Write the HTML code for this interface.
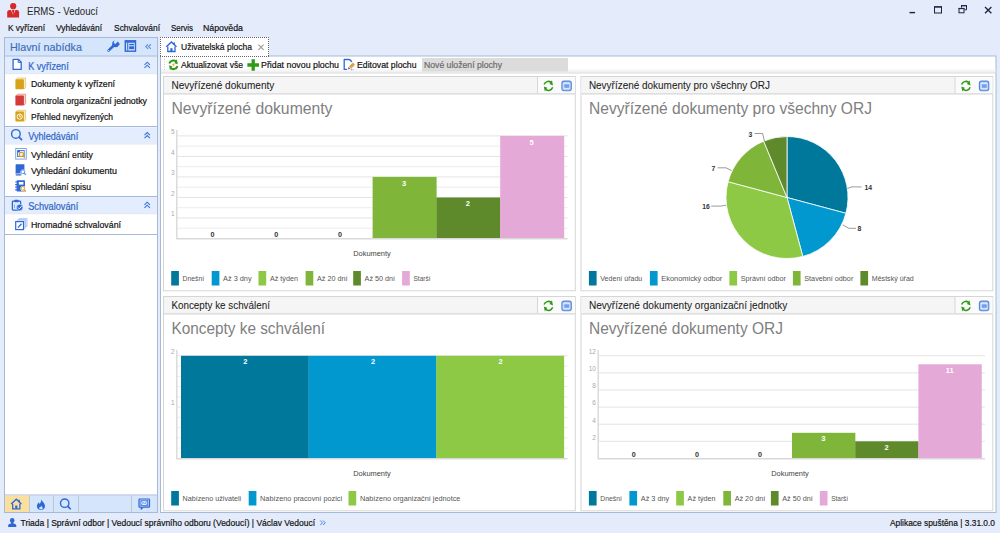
<!DOCTYPE html>
<html><head><meta charset="utf-8"><title>ERMS - Vedoucí</title>
<style>
html,body{margin:0;padding:0;background:#e4ecfb;overflow:hidden}
svg{display:block}
text{font-family:"Liberation Sans",sans-serif;}
</style></head><body>
<svg width="1000" height="533" viewBox="0 0 1000 533">
<rect x="0" y="0" width="1000" height="533" fill="#e4ecfb"/>
<g><circle cx="13.2" cy="6.2" r="3.1" fill="#d42a2a"/><path d="M7.2 17.4 V12.2 Q7.2 9.9 9.6 9.9 H16.8 Q19.1 9.9 19.1 12.2 V17.4 Z" fill="#d42a2a"/><path d="M11.3 9.9 L13.2 14.2 L15.1 9.9" stroke="#f6dcdc" stroke-width="0.9" fill="none"/><path d="M13.2 10.6 l0.8 1 l-0.4 3 l-0.4 0.8 l-0.4 -0.8 l-0.4 -3z" fill="#d42a2a"/></g>
<text class="t" x="27" y="14.8" font-size="10.2" fill="#2a2a2a" textLength="71" lengthAdjust="spacingAndGlyphs" stroke="#2a2a2a" stroke-width="0.05">ERMS - Vedoucí</text>
<path d="M909.5 12.6 h5.6" stroke="#1a2340" stroke-width="1.4" fill="none"/>
<rect x="934.5" y="7" width="7" height="6" stroke="#1a2340" stroke-width="1" fill="none"/><path d="M934 6.8 h8" stroke="#1a2340" stroke-width="1.2"/>
<path d="M961.5 7.6 V5.8 h5 v4 h-2" stroke="#1a2340" stroke-width="1" fill="none"/><rect x="959" y="8.6" width="5" height="4.2" stroke="#1a2340" stroke-width="1" fill="none"/><path d="M958.5 8.4 h6 M961 5.6 h6" stroke="#1a2340" stroke-width="1"/>
<path d="M985 7 l6.4 6.2 M991.4 7 l-6.4 6.2" stroke="#1a2340" stroke-width="1.3" fill="none"/>
<text class="t" x="8" y="30.8" font-size="9.5" fill="#111" textLength="37" lengthAdjust="spacingAndGlyphs" stroke="#111" stroke-width="0.2">K vyřízení</text>
<text class="t" x="56" y="30.8" font-size="9.5" fill="#111" textLength="46" lengthAdjust="spacingAndGlyphs" stroke="#111" stroke-width="0.2">Vyhledávání</text>
<text class="t" x="114" y="30.8" font-size="9.5" fill="#111" textLength="46" lengthAdjust="spacingAndGlyphs" stroke="#111" stroke-width="0.2">Schvalování</text>
<text class="t" x="171" y="30.8" font-size="9.5" fill="#111" textLength="22" lengthAdjust="spacingAndGlyphs" stroke="#111" stroke-width="0.2">Servis</text>
<text class="t" x="203" y="30.8" font-size="9.5" fill="#111" textLength="40" lengthAdjust="spacingAndGlyphs" stroke="#111" stroke-width="0.2">Nápověda</text>
<rect x="4.5" y="37.5" width="153" height="475" fill="#fff" stroke="#a6b9d8"/>
<rect x="5" y="38" width="152" height="17.5" fill="#d5e5fc"/>
<path d="M5 56 H157" stroke="#b3c6e4" stroke-width="1.6"/>
<text class="t" x="10" y="50.6" font-size="11.5" fill="#3a6ab8" textLength="72" lengthAdjust="spacingAndGlyphs" stroke="#3a6ab8" stroke-width="0.12">Hlavní nabídka</text>
<g transform="translate(106.9,40.4)"><path d="M1.6 10.3 L7.3 4.6" stroke="#2f68d3" stroke-width="2.5" stroke-linecap="round" fill="none"/><circle cx="8.6" cy="3.5" r="3.3" fill="#2f68d3"/><path d="M8.2 3.9 L12.5 -0.4 L9.5 -2 L6.6 1.6 Z" fill="#d5e4fb"/><path d="M9.6 4.8 L12.6 3.3" stroke="#2f68d3" stroke-width="1.6" fill="none"/><circle cx="1.7" cy="10.2" r="0.7" fill="#d5e4fb"/></g>
<g transform="translate(124.6,40.1)"><rect x="0" y="0" width="11.6" height="11.8" fill="#2f68d3"/><rect x="1.4" y="2.6" width="8.8" height="7.8" fill="#cfe0fb"/><rect x="2.6" y="2.6" width="1" height="7.8" fill="#2f68d3"/><rect x="4.6" y="3.8" width="4.8" height="1.3" fill="#2f68d3"/><rect x="4.6" y="6.2" width="4.8" height="2.8" fill="#2f68d3"/></g>
<g transform="translate(145.6,44.3)"><path d="M2.4 0 L0.2 2.3 L2.4 4.6 M5.2 0 L3 2.3 L5.2 4.6" stroke="#5f8de2" stroke-width="1.2" fill="none"/></g>
<rect x="5" y="57" width="152" height="16.2" fill="#e3edfd"/>
<path d="M5 73.7 H157" stroke="#dfe5ee"/>
<text class="t" x="28.2" y="69.5" font-size="10" fill="#2f64c8" textLength="40.5" lengthAdjust="spacingAndGlyphs" stroke="#2f64c8" stroke-width="0.2">K vyřízení</text>
<g transform="translate(144.3,61.9)"><path d="M0.2 2.9 L2.9 0.3 L5.6 2.9 M0.2 5.9 L2.9 3.3 L5.6 5.9" stroke="#3a72da" stroke-width="1.1" fill="none"/></g>
<rect x="5" y="127.3" width="152" height="16.2" fill="#e3edfd"/>
<path d="M5 144.0 H157" stroke="#dfe5ee"/>
<text class="t" x="28.2" y="139.8" font-size="10" fill="#2f64c8" textLength="50" lengthAdjust="spacingAndGlyphs" stroke="#2f64c8" stroke-width="0.2">Vyhledávání</text>
<g transform="translate(144.3,132.2)"><path d="M0.2 2.9 L2.9 0.3 L5.6 2.9 M0.2 5.9 L2.9 3.3 L5.6 5.9" stroke="#3a72da" stroke-width="1.1" fill="none"/></g>
<rect x="5" y="197" width="152" height="16.2" fill="#e3edfd"/>
<path d="M5 213.7 H157" stroke="#dfe5ee"/>
<text class="t" x="28.2" y="209.5" font-size="10" fill="#2f64c8" textLength="50" lengthAdjust="spacingAndGlyphs" stroke="#2f64c8" stroke-width="0.2">Schvalování</text>
<g transform="translate(144.3,201.9)"><path d="M0.2 2.9 L2.9 0.3 L5.6 2.9 M0.2 5.9 L2.9 3.3 L5.6 5.9" stroke="#3a72da" stroke-width="1.1" fill="none"/></g>
<path d="M5 126.5 H157 M5 196.5 H157 M5 234.5 H157" stroke="#a6b9d8"/>
<g transform="translate(12.4,58.6)"><path d="M0.7 0.7 H6 L8.8 3.6 V10.8 H0.7 Z" fill="#fff" stroke="#2f68d3" stroke-width="1.3" stroke-linejoin="round"/><path d="M5.8 0.8 V3.8 H8.8" fill="none" stroke="#2f68d3" stroke-width="1"/></g>
<circle cx="15.9" cy="133.9" r="4.3" fill="none" stroke="#2f68d3" stroke-width="1.4"/><path d="M19.14 137.14 L21.54 139.54" stroke="#2f68d3" stroke-width="1.7" stroke-linecap="round"/>
<g transform="translate(11.7,199.5)"><rect x="0.7" y="1.6" width="8.2" height="9" rx="0.8" fill="#e3edfd" stroke="#2f68d3" stroke-width="1.3"/><rect x="2.8" y="0.2" width="4" height="2.6" rx="0.6" fill="#2f68d3"/><path d="M2.8 5 V8.6" stroke="#7ea6ea" stroke-width="0.9"/><circle cx="8" cy="8" r="3.2" fill="#2f68d3" stroke="#e3edfd" stroke-width="0.6"/><path d="M6.3 8 L7.6 9.3 L9.8 6.8" stroke="#fff" stroke-width="1" fill="none"/></g>
<text class="t" x="31" y="87.4" font-size="9.3" fill="#111" textLength="84" lengthAdjust="spacingAndGlyphs" stroke="#111" stroke-width="0.2">Dokumenty k vyřízení</text>
<text class="t" x="31" y="103.6" font-size="9.3" fill="#111" textLength="116" lengthAdjust="spacingAndGlyphs" stroke="#111" stroke-width="0.2">Kontrola organizační jednotky</text>
<text class="t" x="31" y="119.8" font-size="9.3" fill="#111" textLength="82" lengthAdjust="spacingAndGlyphs" stroke="#111" stroke-width="0.2">Přehled nevyřízených</text>
<text class="t" x="31" y="157.6" font-size="9.3" fill="#111" textLength="62" lengthAdjust="spacingAndGlyphs" stroke="#111" stroke-width="0.2">Vyhledání entity</text>
<text class="t" x="31" y="173.8" font-size="9.3" fill="#111" textLength="86" lengthAdjust="spacingAndGlyphs" stroke="#111" stroke-width="0.2">Vyhledání dokumentu</text>
<text class="t" x="31" y="190" font-size="9.3" fill="#111" textLength="60" lengthAdjust="spacingAndGlyphs" stroke="#111" stroke-width="0.2">Vyhledání spisu</text>
<text class="t" x="31" y="227.8" font-size="9.3" fill="#111" textLength="90" lengthAdjust="spacingAndGlyphs" stroke="#111" stroke-width="0.2">Hromadné schvalování</text>
<g transform="translate(15.2,77.6)"><path d="M1 1.7 L2.3 0.4 H10.4 V9.9 L9 11.4 Z" fill="#f8ecc8" stroke="#d6a21a" stroke-width="0.45" stroke-linejoin="round"/><rect x="0.2" y="1.7" width="8.5" height="9.9" rx="0.7" fill="#d6a21a"/></g>
<g transform="translate(15.2,93.8)"><path d="M1 1.7 L2.3 0.4 H10.4 V9.9 L9 11.4 Z" fill="#f7dccb" stroke="#d33b3b" stroke-width="0.45" stroke-linejoin="round"/><rect x="0.2" y="1.7" width="8.5" height="9.9" rx="0.7" fill="#d33b3b"/></g>
<g transform="translate(15.2,109.9)"><path d="M1 1.7 L2.3 0.4 H10.4 V9.9 L9 11.4 Z" fill="#f8ecc8" stroke="#d6a21a" stroke-width="0.45" stroke-linejoin="round"/><rect x="0.2" y="1.7" width="8.5" height="9.9" rx="0.7" fill="#d6a21a"/><circle cx="4.5" cy="6.7" r="2.6" fill="none" stroke="#fff" stroke-width="1"/><path d="M4.5 5.2 V6.9 H5.8" stroke="#fff" stroke-width="0.9" fill="none"/></g>
<g transform="translate(15.2,148)"><rect x="0.5" y="0.5" width="10.6" height="10.6" fill="#fff" stroke="#7ea6ea" stroke-width="1"/><rect x="2.4" y="2.4" width="6.6" height="6.2" fill="#eef3fc" stroke="#2f68d3" stroke-width="0.8"/><rect x="2.4" y="2.4" width="2.4" height="2" fill="#2f68d3"/><circle cx="6.2" cy="6.4" r="2.1" fill="none" stroke="#e39a1c" stroke-width="1.1"/><path d="M7.88 8.08 L9.18 9.38" stroke="#e39a1c" stroke-width="1.4000000000000001" stroke-linecap="round"/></g>
<g transform="translate(15.4,164)"><path d="M0.2 1 Q0.2 0.2 1 0.2 H9 V9.4 H1.4 Q0.2 9.4 0.2 10.4 Z" fill="#2f68d3"/><path d="M0.2 10.4 Q0.2 11.6 1.4 11.6 H6 V10.2 H1.4" fill="#2f68d3"/><circle cx="7.6" cy="8" r="2.6" fill="#fff"/><circle cx="7.4" cy="7.8" r="1.9" fill="none" stroke="#5c90e6" stroke-width="1"/><path d="M8.94 9.34 L10.14 10.54" stroke="#5c90e6" stroke-width="1.3" stroke-linecap="round"/></g>
<g transform="translate(15.2,180)"><rect x="1.4" y="0.2" width="8.4" height="11.4" rx="0.8" fill="#2f68d3"/><path d="M0 2 H2.2 M0 4.6 H2.2 M0 7.2 H2.2 M0 9.8 H2.2" stroke="#2f68d3" stroke-width="1.2"/><rect x="3.6" y="2" width="4.6" height="2.6" fill="#fff"/><circle cx="7.8" cy="8.6" r="2.6" fill="#fff"/><circle cx="7.6" cy="8.4" r="1.8" fill="none" stroke="#e39a1c" stroke-width="1"/><path d="M9.07 9.87 L10.27 11.07" stroke="#e39a1c" stroke-width="1.3" stroke-linecap="round"/></g>
<g transform="translate(15.1,218)"><rect x="4" y="0.3" width="8" height="8.4" fill="#cfdff8" stroke="#a9c4f0" stroke-width="0.6"/><rect x="2.2" y="1.8" width="8" height="8.4" fill="#cfdff8" stroke="#9dbcee" stroke-width="0.6"/><rect x="0.6" y="3.6" width="7.8" height="8" fill="#fff" stroke="#2f68d3" stroke-width="1.2"/><path d="M2.8 9.6 L6.4 5.8" stroke="#2f68d3" stroke-width="1.3"/></g>
<rect x="5" y="495.5" width="152" height="16.5" fill="#d5e5fc"/>
<path d="M5 495 H157" stroke="#a6b9d8"/>
<rect x="5" y="495.5" width="24" height="16.5" fill="#fbdf9f"/>
<path d="M29.5 495.5 V512 M53.5 495.5 V512 M78.5 495.5 V512 M131.5 495.5 V512" stroke="#bcc6d6"/>
<g transform="translate(10.8,498.5)"><path d="M0.4 5.6 L5.5 0.7 L10.6 5.6" fill="none" stroke="#2f68d3" stroke-width="1.4" stroke-linejoin="miter"/><path d="M1.9 5.2 V10.3 H9.1 V5.2" fill="none" stroke="#2f68d3" stroke-width="1.3"/><rect x="4.4" y="7" width="2.2" height="3.2" fill="#2f68d3"/><rect x="7.6" y="1.2" width="1.4" height="2.4" fill="#2f68d3"/></g>
<g transform="translate(36.8,499.4)"><path d="M4.4 0 C5.4 2 8.2 3.6 8.2 6.8 C8.2 9.2 6.4 10.6 4.2 10.6 C1.8 10.6 0.1 9.2 0.1 6.9 C0.1 5 1.3 4.2 1.9 2.8 C2.5 3.6 2.6 4.2 2.8 4.6 C3.6 3.4 4.6 2 4.4 0 Z" fill="#2f68d3"/><path d="M4.2 6.2 C4.8 7.2 5.9 7.8 5.9 8.8 C5.9 9.6 5.2 10 4.2 10 C3.2 10 2.5 9.6 2.5 8.8 C2.5 8 3 7.8 3.3 7.2 C3.6 7.6 3.7 7.8 3.9 7.8 C4.2 7.4 4.3 6.8 4.2 6.2 Z" fill="#d5e4fb"/></g>
<circle cx="64.7" cy="503.2" r="4.2" fill="none" stroke="#2f68d3" stroke-width="1.4"/><path d="M67.87 506.37 L70.27 508.77" stroke="#2f68d3" stroke-width="1.7" stroke-linecap="round"/>
<g transform="translate(138.5,498.4)"><path d="M1.2 0.6 H10.3 Q11 0.6 11 1.3 V8 Q11 8.7 10.3 8.7 H4.6 L2.8 10.8 V8.7 H1.2 Q0.5 8.7 0.5 8 V1.3 Q0.5 0.6 1.2 0.6 Z" fill="#bcd2f7" stroke="#2f68d3" stroke-width="1.2" stroke-linejoin="round"/><rect x="2.4" y="2.4" width="6.8" height="4.6" fill="#e9f0fd" stroke="#2f68d3" stroke-width="0.7"/><path d="M2.4 2.4 L5.8 5.2 L9.2 2.4 M2.4 7 L4.8 4.6 M9.2 7 L6.8 4.6" stroke="#2f68d3" stroke-width="0.6" fill="none"/></g>
<g transform="translate(8,518)"><circle cx="4.2" cy="2.4" r="2.3" fill="#2f68d3"/><path d="M3.1 4 H5.3 V5.6 Q8.3 6 8.3 8 V9 H0.1 V8 Q0.1 6 3.1 5.6 Z" fill="#2f68d3"/></g>
<text class="t" x="20.5" y="526" font-size="9.5" fill="#111" textLength="294.5" lengthAdjust="spacingAndGlyphs" stroke="#111" stroke-width="0.2">Triada | Správní odbor | Vedoucí správního odboru (Vedoucí) | Václav Vedoucí</text>
<g transform="translate(320,520.5)"><path d="M0.3 0 L2.5 2.3 L0.3 4.6 M3.1 0 L5.3 2.3 L3.1 4.6" stroke="#4a82e0" stroke-width="1" fill="none"/></g>
<text class="t" x="890" y="526" font-size="9.5" fill="#111" textLength="105" lengthAdjust="spacingAndGlyphs" stroke="#111" stroke-width="0.2">Aplikace spuštěna | 3.31.0.0</text>
<rect x="160.5" y="56" width="835.5" height="456.5" fill="#fff" stroke="#a6b9d8"/>
<rect x="160" y="37" width="109" height="20" fill="#fff"/>
<path d="M160 37.5 H269 M160 56.5 H269 M160.5 37 V57 M268.5 37 V57" stroke="#666" stroke-dasharray="1 1" fill="none"/>
<g transform="translate(165.9,41.2)"><path d="M0.4 5.6 L5.5 0.7 L10.6 5.6" fill="none" stroke="#2f68d3" stroke-width="1.4" stroke-linejoin="miter"/><path d="M1.9 5.2 V10.3 H9.1 V5.2" fill="none" stroke="#2f68d3" stroke-width="1.3"/><rect x="4.4" y="7" width="2.2" height="3.2" fill="#2f68d3"/><rect x="7.6" y="1.2" width="1.4" height="2.4" fill="#2f68d3"/></g>
<text class="t" x="181" y="49.8" font-size="9.5" fill="#111" textLength="71" lengthAdjust="spacingAndGlyphs" stroke="#111" stroke-width="0.2">Uživatelská plocha</text>
<path d="M258.4 44.6 l5.2 5.2 M263.6 44.6 l-5.2 5.2" stroke="#9a9a9a" stroke-width="1.1" fill="none"/>
<rect x="161" y="69" width="834.5" height="1.5" fill="#f8f8f8"/><rect x="161" y="70.5" width="834.5" height="2" fill="#f1f1f1"/>
<path d="M161 73 H995.5" stroke="#d9d9d9"/>
<rect x="422" y="58" width="146" height="13.5" fill="#dcdcdc"/>
<path d="M164.5 59 V71" stroke="#c9c9c9" stroke-dasharray="1 1.5"/>
<g transform="translate(173.4,64.8)"><path d="M-4.09 -1.33 A4.3 4.3 0 0 1 2.65 -3.39" stroke="#2f9a18" stroke-width="2" fill="none"/><path d="M3.44 -5.51 L1.01 -1.61 L4.38 -0.46 Z" fill="#2f9a18"/><path d="M4.09 1.33 A4.3 4.3 0 0 1 -2.65 3.39" stroke="#2f9a18" stroke-width="2" fill="none"/><path d="M-3.44 5.51 L-1.01 1.61 L-4.38 0.46 Z" fill="#2f9a18"/><circle cx="0" cy="0" r="1.2" fill="#f0b43c"/></g>
<text class="t" x="181" y="67.7" font-size="9.5" fill="#111" textLength="62" lengthAdjust="spacingAndGlyphs" stroke="#111" stroke-width="0.2">Aktualizovat vše</text>
<g transform="translate(247.4,59.2)"><path d="M0 5.8 H11.6 M5.8 0 V11.6" stroke="#2f9a18" stroke-width="3.3" fill="none"/></g>
<text class="t" x="261" y="67.7" font-size="9.5" fill="#111" textLength="78" lengthAdjust="spacingAndGlyphs" stroke="#111" stroke-width="0.2">Přidat novou plochu</text>
<g transform="translate(343.5,58.8)"><path d="M3.6 10.6 H0.7 V0.7 H5.6 Q7.6 1 8.2 3.2" fill="none" stroke="#2f68d3" stroke-width="1.3" stroke-linejoin="round"/><path d="M7.4 10.9 h0.9 M9.2 10.9 h0.6" stroke="#2f68d3" stroke-width="0.9"/><path d="M10.4 4.8 L6.6 8.8" stroke="#dba055" stroke-width="3" fill="none"/><path d="M4.6 10.4 L5 8.3 L6.9 10 Z" fill="#5a5048"/><path d="M5.3 7.9 L7.5 10" stroke="#f3dcb8" stroke-width="0.8"/></g>
<text class="t" x="357" y="67.7" font-size="9.5" fill="#111" textLength="59.5" lengthAdjust="spacingAndGlyphs" stroke="#111" stroke-width="0.2">Editovat plochu</text>
<text class="t" x="424" y="67.7" font-size="9.5" fill="#6a6a6a" textLength="78" lengthAdjust="spacingAndGlyphs" stroke="#6a6a6a" stroke-width="0.2">Nové uložení plochy</text>
<rect x="163.5" y="76.5" width="411.8" height="214.3" fill="#fff" stroke="#d6d6d6"/>
<rect x="164" y="77" width="374" height="16.5" fill="#f5f5f5"/>
<rect x="538" y="77" width="37" height="16.5" fill="#fbfbfb"/>
<path d="M164 93.8 H575" stroke="#d6d6d6" stroke-width="1.3"/><path d="M537.5 77 V93" stroke="#d6d6d6"/>
<text class="t" x="171.4" y="89.4" font-size="10.2" fill="#1c1c1c" textLength="103" lengthAdjust="spacingAndGlyphs" stroke="#1c1c1c" stroke-width="0.05">Nevyřízené dokumenty</text>
<text class="t" x="171.5" y="113.7" font-size="15.6" fill="#808080" textLength="161" lengthAdjust="spacingAndGlyphs">Nevyřízené dokumenty</text>
<g transform="translate(548.4,85.9)"><path d="M-4.28 -1.39 A4.5 4.5 0 0 1 2.77 -3.55" stroke="#2f9a18" stroke-width="1.5" fill="none"/><path d="M3.55 -5.68 L1.11 -1.78 L4.57 -0.48 Z" fill="#2f9a18"/><path d="M4.28 1.39 A4.5 4.5 0 0 1 -2.77 3.55" stroke="#2f9a18" stroke-width="1.5" fill="none"/><path d="M-3.55 5.68 L-1.11 1.78 L-4.57 0.48 Z" fill="#2f9a18"/></g>
<g transform="translate(561.3,80.5)"><rect x="0.6" y="0.6" width="9.4" height="9.6" rx="2.2" fill="#b5ccf2" stroke="#4f86df" stroke-width="1.1"/><rect x="2.1" y="2.1" width="6.4" height="6.4" fill="#dbe7fb"/><rect x="3" y="3.9" width="4.9" height="3.3" fill="#5f92e4"/><rect x="3" y="5.3" width="4.9" height="0.5" fill="#a9c5f2"/></g>
<rect x="581.0" y="76.5" width="411.8" height="214.3" fill="#fff" stroke="#d6d6d6"/>
<rect x="581.5" y="77" width="374" height="16.5" fill="#f5f5f5"/>
<rect x="955.5" y="77" width="37" height="16.5" fill="#fbfbfb"/>
<path d="M581.5 93.8 H992.5" stroke="#d6d6d6" stroke-width="1.3"/><path d="M955.0 77 V93" stroke="#d6d6d6"/>
<text class="t" x="588.9" y="89.4" font-size="10.2" fill="#1c1c1c" textLength="181" lengthAdjust="spacingAndGlyphs" stroke="#1c1c1c" stroke-width="0.05">Nevyřízené dokumenty pro všechny ORJ</text>
<text class="t" x="589.0" y="113.7" font-size="15.6" fill="#808080" textLength="283" lengthAdjust="spacingAndGlyphs">Nevyřízené dokumenty pro všechny ORJ</text>
<g transform="translate(965.9,85.9)"><path d="M-4.28 -1.39 A4.5 4.5 0 0 1 2.77 -3.55" stroke="#2f9a18" stroke-width="1.5" fill="none"/><path d="M3.55 -5.68 L1.11 -1.78 L4.57 -0.48 Z" fill="#2f9a18"/><path d="M4.28 1.39 A4.5 4.5 0 0 1 -2.77 3.55" stroke="#2f9a18" stroke-width="1.5" fill="none"/><path d="M-3.55 5.68 L-1.11 1.78 L-4.57 0.48 Z" fill="#2f9a18"/></g>
<g transform="translate(978.8,80.5)"><rect x="0.6" y="0.6" width="9.4" height="9.6" rx="2.2" fill="#b5ccf2" stroke="#4f86df" stroke-width="1.1"/><rect x="2.1" y="2.1" width="6.4" height="6.4" fill="#dbe7fb"/><rect x="3" y="3.9" width="4.9" height="3.3" fill="#5f92e4"/><rect x="3" y="5.3" width="4.9" height="0.5" fill="#a9c5f2"/></g>
<rect x="163.5" y="296.5" width="411.8" height="214.3" fill="#fff" stroke="#d6d6d6"/>
<rect x="164" y="297" width="374" height="16.5" fill="#f5f5f5"/>
<rect x="538" y="297" width="37" height="16.5" fill="#fbfbfb"/>
<path d="M164 313.8 H575" stroke="#d6d6d6" stroke-width="1.3"/><path d="M537.5 297 V313" stroke="#d6d6d6"/>
<text class="t" x="171.4" y="309.4" font-size="10.2" fill="#1c1c1c" textLength="98.5" lengthAdjust="spacingAndGlyphs" stroke="#1c1c1c" stroke-width="0.05">Koncepty ke schválení</text>
<text class="t" x="171.5" y="333.7" font-size="15.6" fill="#808080" textLength="153.5" lengthAdjust="spacingAndGlyphs">Koncepty ke schválení</text>
<g transform="translate(548.4,305.9)"><path d="M-4.28 -1.39 A4.5 4.5 0 0 1 2.77 -3.55" stroke="#2f9a18" stroke-width="1.5" fill="none"/><path d="M3.55 -5.68 L1.11 -1.78 L4.57 -0.48 Z" fill="#2f9a18"/><path d="M4.28 1.39 A4.5 4.5 0 0 1 -2.77 3.55" stroke="#2f9a18" stroke-width="1.5" fill="none"/><path d="M-3.55 5.68 L-1.11 1.78 L-4.57 0.48 Z" fill="#2f9a18"/></g>
<g transform="translate(561.3,300.5)"><rect x="0.6" y="0.6" width="9.4" height="9.6" rx="2.2" fill="#b5ccf2" stroke="#4f86df" stroke-width="1.1"/><rect x="2.1" y="2.1" width="6.4" height="6.4" fill="#dbe7fb"/><rect x="3" y="3.9" width="4.9" height="3.3" fill="#5f92e4"/><rect x="3" y="5.3" width="4.9" height="0.5" fill="#a9c5f2"/></g>
<rect x="581.0" y="296.5" width="411.8" height="214.3" fill="#fff" stroke="#d6d6d6"/>
<rect x="581.5" y="297" width="374" height="16.5" fill="#f5f5f5"/>
<rect x="955.5" y="297" width="37" height="16.5" fill="#fbfbfb"/>
<path d="M581.5 313.8 H992.5" stroke="#d6d6d6" stroke-width="1.3"/><path d="M955.0 297 V313" stroke="#d6d6d6"/>
<text class="t" x="588.9" y="309.4" font-size="10.2" fill="#1c1c1c" textLength="198.5" lengthAdjust="spacingAndGlyphs" stroke="#1c1c1c" stroke-width="0.05">Nevyřízené dokumenty organizační jednotky</text>
<text class="t" x="589.0" y="333.7" font-size="15.6" fill="#808080" textLength="194" lengthAdjust="spacingAndGlyphs">Nevyřízené dokumenty ORJ</text>
<g transform="translate(965.9,305.9)"><path d="M-4.28 -1.39 A4.5 4.5 0 0 1 2.77 -3.55" stroke="#2f9a18" stroke-width="1.5" fill="none"/><path d="M3.55 -5.68 L1.11 -1.78 L4.57 -0.48 Z" fill="#2f9a18"/><path d="M4.28 1.39 A4.5 4.5 0 0 1 -2.77 3.55" stroke="#2f9a18" stroke-width="1.5" fill="none"/><path d="M-3.55 5.68 L-1.11 1.78 L-4.57 0.48 Z" fill="#2f9a18"/></g>
<g transform="translate(978.8,300.5)"><rect x="0.6" y="0.6" width="9.4" height="9.6" rx="2.2" fill="#b5ccf2" stroke="#4f86df" stroke-width="1.1"/><rect x="2.1" y="2.1" width="6.4" height="6.4" fill="#dbe7fb"/><rect x="3" y="3.9" width="4.9" height="3.3" fill="#5f92e4"/><rect x="3" y="5.3" width="4.9" height="0.5" fill="#a9c5f2"/></g>
<path d="M176.8 228.24 H567.5" stroke="#ececec"/>
<path d="M176.8 217.98 H567.5" stroke="#e3e3e3"/>
<path d="M176.8 207.72 H567.5" stroke="#ececec"/>
<path d="M176.8 197.46 H567.5" stroke="#e3e3e3"/>
<path d="M176.8 187.2 H567.5" stroke="#ececec"/>
<path d="M176.8 176.94 H567.5" stroke="#e3e3e3"/>
<path d="M176.8 166.68 H567.5" stroke="#ececec"/>
<path d="M176.8 156.42 H567.5" stroke="#e3e3e3"/>
<path d="M176.8 146.16 H567.5" stroke="#ececec"/>
<path d="M176.8 135.9 H567.5" stroke="#e3e3e3"/>
<text class="t" x="212.4" y="237.0" font-size="7.2" fill="#333" font-weight="bold" text-anchor="middle">0</text>
<text class="t" x="276.3" y="237.0" font-size="7.2" fill="#333" font-weight="bold" text-anchor="middle">0</text>
<text class="t" x="340.1" y="237.0" font-size="7.2" fill="#333" font-weight="bold" text-anchor="middle">0</text>
<rect x="372.6" y="176.9" width="64.00" height="61.6" fill="#7fb63a"/>
<text class="t" x="404.0" y="185.5" font-size="7.5" fill="#fff" font-weight="bold" text-anchor="middle">3</text>
<rect x="436.4" y="197.5" width="64.00" height="41.0" fill="#5f8a2b"/>
<text class="t" x="467.8" y="206.1" font-size="7.5" fill="#fff" font-weight="bold" text-anchor="middle">2</text>
<rect x="500.2" y="135.9" width="64.00" height="102.6" fill="#e4a9d7"/>
<text class="t" x="531.7" y="144.5" font-size="7.5" fill="#fff" font-weight="bold" text-anchor="middle">5</text>
<path d="M176.8 130 V238.8 H567.5" stroke="#d9d9d9" stroke-width="1.4" fill="none"/>
<text class="t" x="174.5" y="216.3" font-size="6.5" fill="#aaa" text-anchor="end">1</text>
<text class="t" x="174.5" y="195.8" font-size="6.5" fill="#aaa" text-anchor="end">2</text>
<text class="t" x="174.5" y="175.2" font-size="6.5" fill="#aaa" text-anchor="end">3</text>
<text class="t" x="174.5" y="154.7" font-size="6.5" fill="#aaa" text-anchor="end">4</text>
<text class="t" x="174.5" y="134.2" font-size="6.5" fill="#aaa" text-anchor="end">5</text>
<text class="t" x="372" y="256.2" font-size="7" fill="#444" textLength="37.5" lengthAdjust="spacingAndGlyphs" text-anchor="middle">Dokumenty</text>
<rect x="171.2" y="271" width="7.7" height="14.5" fill="#00789c"/>
<text class="t" x="182.6" y="281" font-size="7" fill="#555" textLength="21.5" lengthAdjust="spacingAndGlyphs">Dnešní</text>
<rect x="211.7" y="271" width="7.7" height="14.5" fill="#0098cf"/>
<text class="t" x="223.1" y="281" font-size="7" fill="#555" textLength="28.5" lengthAdjust="spacingAndGlyphs">Až 3 dny</text>
<rect x="258.5" y="271" width="7.7" height="14.5" fill="#8dc944"/>
<text class="t" x="269.90000000000003" y="281" font-size="7" fill="#555" textLength="28" lengthAdjust="spacingAndGlyphs">Až týden</text>
<rect x="305.59999999999997" y="271" width="7.7" height="14.5" fill="#7fb63a"/>
<text class="t" x="317.0" y="281" font-size="7" fill="#555" textLength="30.5" lengthAdjust="spacingAndGlyphs">Až 20 dní</text>
<rect x="353.2" y="271" width="7.7" height="14.5" fill="#5f8a2b"/>
<text class="t" x="364.6" y="281" font-size="7" fill="#555" textLength="30.5" lengthAdjust="spacingAndGlyphs">Až 50 dní</text>
<rect x="402.09999999999997" y="271" width="7.7" height="14.5" fill="#e4a9d7"/>
<text class="t" x="413.5" y="281" font-size="7" fill="#555" textLength="17" lengthAdjust="spacingAndGlyphs">Starší</text>
<path d="M598.2 441.3 H985" stroke="#e3e3e3"/>
<path d="M598.2 424.2 H985" stroke="#e3e3e3"/>
<path d="M598.2 407.1 H985" stroke="#e3e3e3"/>
<path d="M598.2 390.0 H985" stroke="#e3e3e3"/>
<path d="M598.2 372.9 H985" stroke="#e3e3e3"/>
<path d="M598.2 355.8 H985" stroke="#e3e3e3"/>
<text class="t" x="633.7" y="456.9" font-size="7.2" fill="#333" font-weight="bold" text-anchor="middle">0</text>
<text class="t" x="696.9" y="456.9" font-size="7.2" fill="#333" font-weight="bold" text-anchor="middle">0</text>
<text class="t" x="760.1" y="456.9" font-size="7.2" fill="#333" font-weight="bold" text-anchor="middle">0</text>
<rect x="792.0" y="432.8" width="63.35" height="25.6" fill="#7fb63a"/>
<text class="t" x="823.3" y="441.4" font-size="7.5" fill="#fff" font-weight="bold" text-anchor="middle">3</text>
<rect x="855.2" y="441.3" width="63.35" height="17.1" fill="#5f8a2b"/>
<text class="t" x="886.5" y="449.9" font-size="7.5" fill="#fff" font-weight="bold" text-anchor="middle">2</text>
<rect x="918.4" y="364.3" width="63.35" height="94.1" fill="#e4a9d7"/>
<text class="t" x="949.7" y="372.9" font-size="7.5" fill="#fff" font-weight="bold" text-anchor="middle">11</text>
<path d="M598.2 350 V458.7 H985" stroke="#d9d9d9" stroke-width="1.4" fill="none"/>
<text class="t" x="595.9000000000001" y="439.6" font-size="6.5" fill="#aaa" text-anchor="end">2</text>
<text class="t" x="595.9000000000001" y="422.5" font-size="6.5" fill="#aaa" text-anchor="end">4</text>
<text class="t" x="595.9000000000001" y="405.4" font-size="6.5" fill="#aaa" text-anchor="end">6</text>
<text class="t" x="595.9000000000001" y="388.3" font-size="6.5" fill="#aaa" text-anchor="end">8</text>
<text class="t" x="595.9000000000001" y="371.2" font-size="6.5" fill="#aaa" text-anchor="end">10</text>
<text class="t" x="595.9000000000001" y="354.1" font-size="6.5" fill="#aaa" text-anchor="end">12</text>
<text class="t" x="790" y="476" font-size="7" fill="#444" textLength="37.5" lengthAdjust="spacingAndGlyphs" text-anchor="middle">Dokumenty</text>
<rect x="588.9000000000001" y="491" width="7.7" height="14.5" fill="#00789c"/>
<text class="t" x="600.3000000000001" y="501" font-size="7" fill="#555" textLength="21.5" lengthAdjust="spacingAndGlyphs">Dnešní</text>
<rect x="629.4000000000001" y="491" width="7.7" height="14.5" fill="#0098cf"/>
<text class="t" x="640.8000000000001" y="501" font-size="7" fill="#555" textLength="28.5" lengthAdjust="spacingAndGlyphs">Až 3 dny</text>
<rect x="676.2" y="491" width="7.7" height="14.5" fill="#8dc944"/>
<text class="t" x="687.6" y="501" font-size="7" fill="#555" textLength="28" lengthAdjust="spacingAndGlyphs">Až týden</text>
<rect x="723.3000000000001" y="491" width="7.7" height="14.5" fill="#7fb63a"/>
<text class="t" x="734.7" y="501" font-size="7" fill="#555" textLength="30.5" lengthAdjust="spacingAndGlyphs">Až 20 dní</text>
<rect x="770.9000000000001" y="491" width="7.7" height="14.5" fill="#5f8a2b"/>
<text class="t" x="782.3000000000001" y="501" font-size="7" fill="#555" textLength="30.5" lengthAdjust="spacingAndGlyphs">Až 50 dní</text>
<rect x="819.8000000000001" y="491" width="7.7" height="14.5" fill="#e4a9d7"/>
<text class="t" x="831.2" y="501" font-size="7" fill="#555" textLength="17" lengthAdjust="spacingAndGlyphs">Starší</text>
<path d="M176.8 448.14 H567.5" stroke="#ececec"/>
<path d="M176.8 437.88 H567.5" stroke="#ececec"/>
<path d="M176.8 427.62 H567.5" stroke="#ececec"/>
<path d="M176.8 417.36 H567.5" stroke="#ececec"/>
<path d="M176.8 407.1 H567.5" stroke="#e3e3e3"/>
<path d="M176.8 396.84 H567.5" stroke="#ececec"/>
<path d="M176.8 386.58 H567.5" stroke="#ececec"/>
<path d="M176.8 376.32 H567.5" stroke="#ececec"/>
<path d="M176.8 366.06 H567.5" stroke="#ececec"/>
<path d="M176.8 355.8 H567.5" stroke="#e3e3e3"/>
<rect x="181.0" y="355.8" width="127.82" height="102.6" fill="#00789c"/>
<text class="t" x="245.3" y="364.4" font-size="7.5" fill="#fff" font-weight="bold" text-anchor="middle">2</text>
<rect x="308.7" y="355.8" width="127.82" height="102.6" fill="#0098cf"/>
<text class="t" x="373.0" y="364.4" font-size="7.5" fill="#fff" font-weight="bold" text-anchor="middle">2</text>
<rect x="436.3" y="355.8" width="127.82" height="102.6" fill="#8dc944"/>
<text class="t" x="500.7" y="364.4" font-size="7.5" fill="#fff" font-weight="bold" text-anchor="middle">2</text>
<path d="M176.8 350 V458.7 H567.5" stroke="#d9d9d9" stroke-width="1.4" fill="none"/>
<text class="t" x="174.5" y="405.4" font-size="6.5" fill="#aaa" text-anchor="end">1</text>
<text class="t" x="174.5" y="354.1" font-size="6.5" fill="#aaa" text-anchor="end">2</text>
<text class="t" x="372" y="475.7" font-size="7" fill="#444" textLength="37.5" lengthAdjust="spacingAndGlyphs" text-anchor="middle">Dokumenty</text>
<rect x="171.2" y="491" width="7.7" height="14.5" fill="#00789c"/>
<text class="t" x="182.6" y="501" font-size="7" fill="#555" textLength="58.5" lengthAdjust="spacingAndGlyphs">Nabízeno uživateli</text>
<rect x="248.7" y="491" width="7.7" height="14.5" fill="#0098cf"/>
<text class="t" x="260.1" y="501" font-size="7" fill="#555" textLength="82" lengthAdjust="spacingAndGlyphs">Nabízeno pracovní pozici</text>
<rect x="348.5" y="491" width="7.7" height="14.5" fill="#8dc944"/>
<text class="t" x="359.90000000000003" y="501" font-size="7" fill="#555" textLength="100.5" lengthAdjust="spacingAndGlyphs">Nabízeno organizační jednotce</text>
<path d="M787 197.5 L787.00 136.50 A61 61 0 0 1 845.92 213.29 Z" fill="#00789c" stroke="#fff" stroke-width="0.8" stroke-linejoin="round"/>
<path d="M787 197.5 L845.92 213.29 A61 61 0 0 1 802.79 256.42 Z" fill="#0098cf" stroke="#fff" stroke-width="0.8" stroke-linejoin="round"/>
<path d="M787 197.5 L802.79 256.42 A61 61 0 0 1 728.08 181.71 Z" fill="#8dc944" stroke="#fff" stroke-width="0.8" stroke-linejoin="round"/>
<path d="M787 197.5 L728.08 181.71 A61 61 0 0 1 763.66 141.14 Z" fill="#7fb63a" stroke="#fff" stroke-width="0.8" stroke-linejoin="round"/>
<path d="M787 197.5 L763.66 141.14 A61 61 0 0 1 787.00 136.50 Z" fill="#5f8a2b" stroke="#fff" stroke-width="0.8" stroke-linejoin="round"/>
<path d="M847.5 188.4 L851.7 186.9 L861.6 186.9" stroke="#555" stroke-width="0.6" fill="none"/>
<path d="M842.7 224.9 L848.9 228.3 L856.0 228.3" stroke="#555" stroke-width="0.6" fill="none"/>
<path d="M726.0 205.2 L720.9 206.1 L711.1 206.1" stroke="#555" stroke-width="0.6" fill="none"/>
<path d="M731.6 170.6 L726.0 167.8 L717.6 167.8" stroke="#555" stroke-width="0.6" fill="none"/>
<path d="M764.5 141.1 L762.6 133.5 L754.7 133.5" stroke="#555" stroke-width="0.6" fill="none"/>
<text class="t" x="864.4" y="190.3" font-size="6.8" fill="#333" font-weight="bold">14</text>
<text class="t" x="857.4" y="230.8" font-size="6.8" fill="#333" font-weight="bold">8</text>
<text class="t" x="709.7" y="209.1" font-size="6.8" fill="#333" font-weight="bold" text-anchor="end">16</text>
<text class="t" x="715.3" y="171.2" font-size="6.8" fill="#333" font-weight="bold" text-anchor="end">7</text>
<text class="t" x="752.4" y="136.5" font-size="6.8" fill="#333" font-weight="bold" text-anchor="end">3</text>
<rect x="588.9000000000001" y="271" width="7.7" height="14.5" fill="#00789c"/>
<text class="t" x="600.3000000000001" y="281" font-size="7" fill="#555" textLength="42" lengthAdjust="spacingAndGlyphs">Vedení úřadu</text>
<rect x="649.9000000000001" y="271" width="7.7" height="14.5" fill="#0098cf"/>
<text class="t" x="661.3000000000001" y="281" font-size="7" fill="#555" textLength="61" lengthAdjust="spacingAndGlyphs">Ekonomický odbor</text>
<rect x="729.4000000000001" y="271" width="7.7" height="14.5" fill="#8dc944"/>
<text class="t" x="740.8000000000001" y="281" font-size="7" fill="#555" textLength="45" lengthAdjust="spacingAndGlyphs">Správní odbor</text>
<rect x="792.9000000000001" y="271" width="7.7" height="14.5" fill="#7fb63a"/>
<text class="t" x="804.3000000000001" y="281" font-size="7" fill="#555" textLength="49" lengthAdjust="spacingAndGlyphs">Stavební odbor</text>
<rect x="860.4000000000001" y="271" width="7.7" height="14.5" fill="#5f8a2b"/>
<text class="t" x="871.8000000000001" y="281" font-size="7" fill="#555" textLength="42" lengthAdjust="spacingAndGlyphs">Městský úřad</text>
</svg>
</body></html>
